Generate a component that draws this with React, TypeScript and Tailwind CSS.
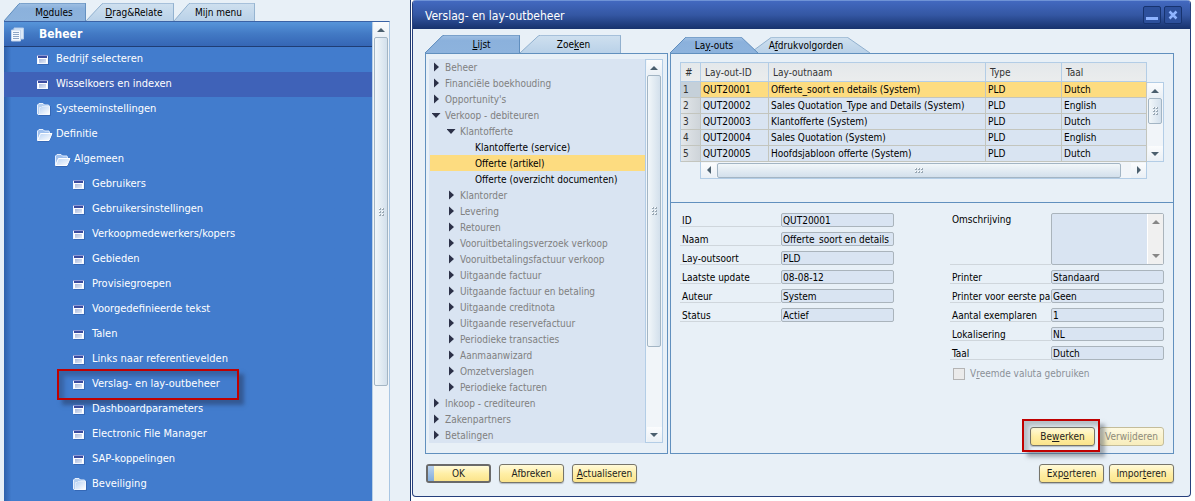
import React from "react";

type IconKind = "form" | "folder" | "open";

const menuItems: { label: string; level: number; icon: IconKind; active?: boolean; marked?: boolean }[] = [
  { label: "Bedrijf selecteren", level: 0, icon: "form" },
  { label: "Wisselkoers en indexen", level: 0, icon: "form", active: true },
  { label: "Systeeminstellingen", level: 0, icon: "folder" },
  { label: "Definitie", level: 0, icon: "open" },
  { label: "Algemeen", level: 1, icon: "open" },
  { label: "Gebruikers", level: 2, icon: "form" },
  { label: "Gebruikersinstellingen", level: 2, icon: "form" },
  { label: "Verkoopmedewerkers/kopers", level: 2, icon: "form" },
  { label: "Gebieden", level: 2, icon: "form" },
  { label: "Provisiegroepen", level: 2, icon: "form" },
  { label: "Voorgedefinieerde tekst", level: 2, icon: "form" },
  { label: "Talen", level: 2, icon: "form" },
  { label: "Links naar referentievelden", level: 2, icon: "form" },
  { label: "Verslag- en lay-outbeheer", level: 2, icon: "form", marked: true },
  { label: "Dashboardparameters", level: 2, icon: "form" },
  { label: "Electronic File Manager", level: 2, icon: "form" },
  { label: "SAP-koppelingen", level: 2, icon: "form" },
  { label: "Beveiliging", level: 2, icon: "folder" },
];

const menuIndent = ["pl-[33px]", "pl-[51px]", "pl-[69px]"];

type Node = { label: string; level: number; state: "closed" | "open" | "leaf"; active?: boolean };

const tree: Node[] = [
  { label: "Beheer", level: 0, state: "closed" },
  { label: "Financiële boekhouding", level: 0, state: "closed" },
  { label: "Opportunity's", level: 0, state: "closed" },
  { label: "Verkoop - debiteuren", level: 0, state: "open" },
  { label: "Klantofferte", level: 1, state: "open" },
  { label: "Klantofferte (service)", level: 2, state: "leaf" },
  { label: "Offerte (artikel)", level: 2, state: "leaf", active: true },
  { label: "Offerte (overzicht documenten)", level: 2, state: "leaf" },
  { label: "Klantorder", level: 1, state: "closed" },
  { label: "Levering", level: 1, state: "closed" },
  { label: "Retouren", level: 1, state: "closed" },
  { label: "Vooruitbetalingsverzoek verkoop", level: 1, state: "closed" },
  { label: "Vooruitbetalingsfactuur verkoop", level: 1, state: "closed" },
  { label: "Uitgaande factuur", level: 1, state: "closed" },
  { label: "Uitgaande factuur en betaling", level: 1, state: "closed" },
  { label: "Uitgaande creditnota", level: 1, state: "closed" },
  { label: "Uitgaande reservefactuur", level: 1, state: "closed" },
  { label: "Periodieke transacties", level: 1, state: "closed" },
  { label: "Aanmaanwizard", level: 1, state: "closed" },
  { label: "Omzetverslagen", level: 1, state: "closed" },
  { label: "Periodieke facturen", level: 1, state: "closed" },
  { label: "Inkoop - crediteuren", level: 0, state: "closed" },
  { label: "Zakenpartners", level: 0, state: "closed" },
  { label: "Betalingen", level: 0, state: "closed" },
];

const treeIndent = ["pl-[2px]", "pl-[17px]", "pl-[32px]"];

const layouts = [
  ["QUT20001", "Offerte_soort en details (System)", "PLD", "Dutch"],
  ["QUT20002", "Sales Quotation_Type and Details (System)", "PLD", "English"],
  ["QUT20003", "Klantofferte (System)", "PLD", "Dutch"],
  ["QUT20004", "Sales Quotation (System)", "PLD", "English"],
  ["QUT20005", "Hoofdsjabloon offerte (System)", "PLD", "Dutch"],
];

const leftFields = [
  ["ID", "QUT20001"],
  ["Naam", "Offerte_soort en details (System)"],
  ["Lay-outsoort", "PLD"],
  ["Laatste update", "08-08-12"],
  ["Auteur", "System"],
  ["Status", "Actief"],
];

const rightFields = [
  ["Printer", "Standaard"],
  ["Printer voor eerste pa", "Geen"],
  ["Aantal exemplaren", "1"],
  ["Lokalisering", "NL"],
  ["Taal", "Dutch"],
];

function MenuIcon({ kind }: { kind: IconKind }) {
  if (kind === "form") {
    return (
      <svg width="16" height="14" viewBox="0 1 16 14" className="shrink-0" aria-hidden="true">
        <rect x="1" y="4" width="11" height="9" fill="#2d5ba6" opacity="0.6" />
        <rect x="0" y="3" width="11" height="9" fill="#f4f8ff" />
        <rect x="1" y="4" width="9" height="2" fill="#3b4ca0" />
        <rect x="0" y="3" width="11" height="1" fill="#8c98d4" />
        <rect x="1" y="6" width="9" height="5" fill="#ffffff" />
        <rect x="2" y="7" width="7" height="4" fill="url(#formFill)" />
      </svg>
    );
  }
  if (kind === "folder") {
    return (
      <svg width="16" height="14" viewBox="0 1 16 14" className="shrink-0" aria-hidden="true">
        <path d="M2 13.500h11.500V4" fill="none" stroke="#2d5ba6" opacity="0.6" />
        <path d="M0.500 12V3L2 1.500h4l1.500 1.500h4L12.500 4.500v8H1z" fill="#b5cff0" stroke="#e8f1fd" />
        <path d="M2.500 5.500h1.500l1-1h7.500v8h-10z" fill="url(#folderFill)" stroke="#ffffff" strokeWidth="0.500" />
      </svg>
    );
  }
  return (
    <svg width="17" height="14" viewBox="0 0 17 14" className="shrink-0" aria-hidden="true">
      <path d="M1 13.500h11L16 5" fill="none" stroke="#2d5ba6" opacity="0.6" />
      <path d="M0.500 12V3L2 1.500h4l1.500 1.500h4.500L12.500 5" fill="#9fc0ee" stroke="#e4efff" />
      <path d="M3.500 5.500h11.500L12 12.500H0.500z" fill="url(#folderFill)" stroke="#ffffff" />
    </svg>
  );
}

function Triangle({ dir }: { dir: "up" | "down" | "left" | "right" }) {
  const shapes = {
    up: "M0 6L4 2L8 6Z",
    down: "M0 2L4 6L8 2Z",
    left: "M6 0L2 4L6 8Z",
    right: "M2 0L6 4L2 8Z",
  };
  return (
    <svg width="8" height="8" viewBox="0 0 8 8" aria-hidden="true">
      <path d={shapes[dir]} fill="currentColor" />
    </svg>
  );
}

function TreeArrow({ state }: { state: "closed" | "open" | "leaf" }) {
  return (
    <svg width="13" height="10" viewBox="0 0 13 10" className="shrink-0 text-[#2c3148]" aria-hidden="true">
      {state === "closed" && <path d="M2 0.500L7 5L2 9.500Z" fill="currentColor" />}
      {state === "open" && <path d="M-0.500 3H8.500L4 8Z" fill="currentColor" />}
    </svg>
  );
}

function Grip({ horizontal }: { horizontal?: boolean }) {
  return (
    <span className={horizontal ? "grid grid-cols-3 gap-px" : "grid grid-cols-2 gap-px"} aria-hidden="true">
      {[0, 1, 2, 3, 4, 5].map((i) => (
        <span key={i} className="size-[2px] border-b border-r border-[#9aa9b5] bg-white" />
      ))}
    </span>
  );
}

function ScrollButton({ dir, label }: { dir: "up" | "down" | "left" | "right"; label: string }) {
  return (
    <button
      type="button"
      aria-label={label}
      className="flex size-[15px] shrink-0 items-center justify-center bg-gradient-to-b from-[#fbfcfd] to-[#eaf0f6] text-[#4b5f6e]"
    >
      <Triangle dir={dir} />
    </button>
  );
}

type TabProps = { children: React.ReactNode; active?: boolean; className: string; shape: "left" | "both" };

function Tab({ children, active, className, shape }: TabProps) {
  const path = shape === "left" ? "M0 100L18 6L20 1H99.500V100" : "M0 100L18 1H81L100 100";
  return (
    <button type="button" role="tab" aria-selected={!!active} className={`relative shrink-0 text-black ${className}`}>
      <svg
        className="absolute inset-0 size-full"
        viewBox="0 0 100 100"
        preserveAspectRatio="none"
        aria-hidden="true"
      >
        <path
          d={path}
          fill={active ? "url(#tabActive)" : "url(#tabIdle)"}
          stroke={active ? "#5f8dbd" : "#90b0ce"}
          vectorEffect="non-scaling-stroke"
        />
      </svg>
      <span className="relative">{children}</span>
    </button>
  );
}

function GoldButton({ children, primary, disabled }: {
  children: React.ReactNode;
  primary?: boolean;
  disabled?: boolean;
}) {
  const edge = primary
    ? "border-2 border-[#6a6a6a]"
    : disabled
      ? "border border-[#c4bd9a]"
      : "border border-[#77756a] shadow-[0_1px_1px_rgba(80,90,100,0.35)]";
  const tone = disabled
    ? "bg-gradient-to-b from-[#fdf9e3] to-[#f8edbb] text-[#8d8b7c]"
    : "bg-gradient-to-b from-[#fffad9] via-[#ffefa6] to-[#fbe48b] text-[#1d1d1d]";
  return (
    <button
      type="button"
      disabled={disabled}
      className={`flex h-[19px] w-[65px] shrink-0 items-center justify-center whitespace-nowrap rounded-[3px] ${edge} ${tone}`}
    >
      {primary && <span className="h-full w-[6px] bg-gradient-to-b from-[#b9d2ee] to-[#84addb]" />}
      <span className={primary ? "flex-1 pr-[6px]" : ""}>{children}</span>
    </button>
  );
}

function Field({ id, label, value }: { id: string; label: string; value: string }) {
  return (
    <div className="flex h-[14px]">
      <label htmlFor={id} className="w-[101px] whitespace-nowrap border-b border-[#cfd6dc] pl-[2px] leading-[15px]">
        {label}
      </label>
      <input
        id={id}
        readOnly
        value={value}
        className="h-[14px] w-[113px] rounded-[2px] border border-[#aab4bc] bg-[#d9e4f2] px-px leading-[12px] text-black outline-none"
      />
    </div>
  );
}

export default function App() {
  return (
    <div className="flex min-h-screen bg-[#e8f0f7] font-['DejaVu_Sans_Condensed','DejaVu_Sans',sans-serif] text-[10px] text-black">
      <svg width="0" height="0" className="absolute" aria-hidden="true">
        <defs>
          <linearGradient id="tabActive" x1="0" y1="0" x2="0" y2="1">
            <stop offset="0" stopColor="#a0c0e3" />
            <stop offset="0.300" stopColor="#8bb1dc" />
            <stop offset="1" stopColor="#8db3dd" />
          </linearGradient>
          <linearGradient id="tabIdle" x1="0" y1="0" x2="0" y2="1">
            <stop offset="0" stopColor="#cfe0ef" />
            <stop offset="1" stopColor="#b9d1e8" />
          </linearGradient>
          <linearGradient id="formFill" x1="0" y1="0" x2="1" y2="1">
            <stop offset="0" stopColor="#a9b9dd" />
            <stop offset="1" stopColor="#e3eaf6" />
          </linearGradient>
          <linearGradient id="folderFill" x1="0" y1="0" x2="1" y2="1">
            <stop offset="0" stopColor="#b9d3f4" />
            <stop offset="1" stopColor="#ffffff" />
          </linearGradient>
        </defs>
      </svg>

      <aside className="flex w-[390px] shrink-0 flex-col pl-1">
        <div role="tablist" className="flex h-[21px] shrink-0 items-end">
          <Tab active shape="left" className="h-[18px] w-[82px] pl-[18px]">
            M<u>o</u>dules
          </Tab>
          <Tab shape="left" className="h-[18px] w-[88px] pl-2">
            <u>D</u>rag&amp;Relate
          </Tab>
          <Tab shape="left" className="h-[18px] w-[81px] pl-2">
            Mi<u>j</u>n menu
          </Tab>
        </div>
        <div className="flex flex-1 border-r border-t border-[#a9c6e3] border-t-[#3a62a5]">
          <nav className="min-w-0 flex-1 bg-gradient-to-r from-[#2f62ac] via-[#427ccd] via-[2%] to-[#427ccd] text-[11px] text-white">
            <div className="flex h-[25px] items-center gap-[14px] border-b border-[#1f3d74] bg-gradient-to-b from-[#5795da] via-[#4279c4] to-[#3566b5] pl-[6px] text-[12px] font-bold">
              <svg width="15" height="15" viewBox="0 0 15 15" className="shrink-0" aria-hidden="true">
                <path d="M4 1h9.500v11H4z" fill="#dce9f8" stroke="#b6cdea" />
                <path d="M1.500 3h9v11h-9z" fill="#f6faff" stroke="#c4d6ee" />
                <path d="M3 5.500h6M3 7.500h6M3 9.500h6M3 11.500h6" stroke="#8ea6c6" />
              </svg>
              <span>Beheer</span>
            </div>
            <ul>
              {menuItems.map((item) => (
                <li key={item.label} className="relative">
                  <a
                    href="#"
                    className={`flex h-[25px] items-center gap-[3px] whitespace-nowrap ${menuIndent[item.level]} ${item.active ? "bg-[#3f62b8]" : ""}`}
                  >
                    <MenuIcon kind={item.icon} />
                    <span className={item.icon === "open" ? "-ml-px" : ""}>{item.label}</span>
                  </a>
                  {item.marked && (
                    <span className="pointer-events-none absolute -top-[3px] left-[53px] h-[31px] w-[182px] border-2 border-[#c00000] shadow-[5px_5px_4px_rgba(40,60,100,0.55),inset_5px_5px_4px_rgba(40,60,100,0.4)]" />
                  )}
                </li>
              ))}
            </ul>
          </nav>
          <div className="flex w-[17px] shrink-0 flex-col items-center border-l border-[#b9d0e6] bg-[#f1f5f9]">
            <ScrollButton dir="up" label="Omhoog" />
            <div className="flex h-[349px] w-[14px] items-center justify-center rounded-[2px] border border-[#a3b5c4] bg-gradient-to-r from-[#f2f7fa] to-[#d3e0ec]">
              <Grip />
            </div>
          </div>
        </div>
      </aside>

      <main className="ml-5 flex min-w-0 flex-1 items-start border-l border-[#1f3a70] bg-white pl-px pr-1">
        <section className="min-w-0 flex-1 overflow-hidden rounded-[4px] border border-t-0 border-[#263f7c] bg-[#e8f0f7]">
          <header className="flex h-[29px] items-center justify-between border-t border-[#6f93d6] bg-gradient-to-b from-[#4369c0] via-[#3457a3] to-[#17326d] pl-3 pr-2 text-white">
            <h1 className="pt-[2px] text-[12px]">Verslag- en lay-outbeheer</h1>
            <div className="flex gap-[3px]">
              <button type="button" aria-label="Minimaliseren" className="flex size-[18px] items-end justify-center rounded-[2px] border border-[#17336f] bg-[#2d509c] pb-[3px]">
                <span className="h-[3px] w-3 bg-[#8fb4ff]" />
              </button>
              <button type="button" aria-label="Sluiten" className="flex size-[18px] items-center justify-center rounded-[2px] border border-[#17336f] bg-[#2d509c]">
                <svg width="10" height="10" viewBox="0 0 10 10" aria-hidden="true">
                  <path d="M1.500 1.500L8.500 8.500M8.500 1.500L1.500 8.500" stroke="#8fb4ff" strokeWidth="2.500" />
                </svg>
              </button>
            </div>
          </header>

          <div className="flex gap-[2px] pl-3 pr-4 pt-[6px]">
            <div className="flex w-[243px] shrink-0 flex-col">
              <div role="tablist" className="flex h-[18px]">
                <Tab active shape="left" className="w-[95px] pl-[18px]">
                  <u>L</u>ijst
                </Tab>
                <Tab shape="left" className="w-[101px] pl-[6px]">
                  Zoe<u>k</u>en
                </Tab>
              </div>
              <div className="flex border border-[#6190be] pb-[10px] pl-[3px] pr-[4px] pt-[5px]">
                <ul className="min-w-0 flex-1 bg-[#d9e4f2]">
                  {tree.map((n) => (
                    <li
                      key={n.label}
                      className={`ml-px flex h-4 items-center whitespace-nowrap ${treeIndent[n.level]} ${n.active ? "bg-[#fddc80]" : ""} ${n.state === "leaf" ? "text-black" : "text-[#808080]"}`}
                    >
                      <TreeArrow state={n.state} />
                      {n.label}
                    </li>
                  ))}
                </ul>
                <div className="flex w-[18px] shrink-0 flex-col items-center border border-[#b3cde6] bg-[#f1f5f9]">
                  <ScrollButton dir="up" label="Omhoog" />
                  <div className="flex h-[272px] w-[14px] items-center justify-center rounded-[2px] border border-[#a3b5c4] bg-gradient-to-r from-[#f2f7fa] to-[#d3e0ec]">
                    <Grip />
                  </div>
                  <div className="flex-1" />
                  <ScrollButton dir="down" label="Omlaag" />
                </div>
              </div>
            </div>

            <div className="flex min-w-0 flex-1 flex-col">
              <div role="tablist" className="flex h-[18px] items-end">
                <Tab active shape="both" className="z-10 h-4 w-[88px]">
                  La<u>y</u>-outs
                </Tab>
                <Tab shape="both" className="-ml-2 h-4 w-[120px] pr-2">
                  A<u>f</u>drukvolgorden
                </Tab>
              </div>
              <div className="flex flex-1 flex-col border border-[#6190be]">
                <div className="border-b border-[#6190be] px-[9px] pb-[23px] pt-2">
                  <div className="flex items-end">
                    <table className="min-w-0 flex-1 border-separate border-spacing-0 border-l border-t border-[#b3cde6] text-left">
                      <thead>
                        <tr className="h-[19px] bg-gradient-to-b from-[#e4e8eb] to-[#ebeded] text-[#333] [&>th]:border-b [&>th]:border-r [&>th]:border-[#b3cde6] [&>th]:px-1 [&>th]:py-0 [&>th]:font-normal">
                          <th className="w-5">#</th>
                          <th className="w-[68px]">Lay-out-ID</th>
                          <th>Lay-outnaam</th>
                          <th className="w-[76px]">Type</th>
                          <th className="w-[85px]">Taal</th>
                        </tr>
                      </thead>
                      <tbody>
                        {layouts.map((row, i) => (
                          <tr
                            key={row[0]}
                            className={`h-4 leading-[15px] ${i === 0 ? "bg-[#fddc80]" : "bg-[#d9e4f2]"} [&>td]:border-b [&>td]:border-r [&>td]:border-[#c3c5be] [&>td]:px-[2px] [&>td]:py-0`}
                          >
                            <td className={i === 0 ? "bg-[#c5d0d9] text-[#333]" : "bg-gradient-to-r from-[#e3e7ea] to-[#ced4d9] text-[#333]"}>{i + 1}</td>
                            {row.map((cell) => (
                              <td key={cell}>{cell}</td>
                            ))}
                          </tr>
                        ))}
                      </tbody>
                    </table>
                    <div className="flex h-[80px] w-[17px] shrink-0 flex-col items-center border border-l-0 border-[#b3cde6] bg-[#f1f5f9]">
                      <ScrollButton dir="up" label="Omhoog" />
                      <div className="flex h-[26px] w-[14px] items-center justify-center rounded-[2px] border border-[#a3b5c4] bg-gradient-to-r from-[#f2f7fa] to-[#d3e0ec]">
                        <Grip />
                      </div>
                      <div className="flex-1" />
                      <ScrollButton dir="down" label="Omlaag" />
                    </div>
                  </div>
                  <div className="ml-5 mr-[17px] flex h-[17px] items-center border border-t-0 border-[#b3cde6] bg-[#f1f5f9]">
                    <ScrollButton dir="left" label="Naar links" />
                    <div className="ml-px flex h-[15px] flex-1 items-center justify-center rounded-[2px] border border-[#a3b5c4] bg-gradient-to-b from-[#f2f7fa] to-[#d3e0ec]">
                      <Grip horizontal />
                    </div>
                    <div className="w-[10px]" />
                    <ScrollButton dir="right" label="Naar rechts" />
                  </div>
                </div>

                <div className="flex justify-between px-[9px] pt-[10px]">
                  <div className="flex flex-col gap-[5px]">
                    {leftFields.map(([label, value], i) => (
                      <Field key={label} id={`algemeen-${i}`} label={label} value={value} />
                    ))}
                  </div>
                  <div className="flex flex-col gap-[5px]">
                    <div className="flex h-[52px]">
                      <label htmlFor="omschrijving" className="w-[101px] border-b border-[#cfd6dc] pl-[2px] leading-[14px]">
                        Omschrijving
                      </label>
                      <div className="flex w-[113px] rounded-[2px] border border-[#aab4bc] bg-[#d9e4f2]">
                        <textarea id="omschrijving" readOnly className="min-w-0 flex-1 resize-none outline-none" />
                        <div className="flex w-4 flex-col items-center justify-between border-l border-white bg-[#f0f0f0] py-1 text-[#868686]">
                          <Triangle dir="up" />
                          <Triangle dir="down" />
                        </div>
                      </div>
                    </div>
                    {rightFields.map(([label, value], i) => (
                      <Field key={label} id={`afdruk-${i}`} label={label} value={value} />
                    ))}
                    <label className="flex items-center gap-[5px] pl-[3px] pt-[1px] text-[#8b9197]">
                      <input type="checkbox" disabled className="size-3 appearance-none border border-[#b4b4b4] bg-[#ebebeb]" />
                      <span>
                        V<u>r</u>eemde valuta gebruiken
                      </span>
                    </label>
                  </div>
                </div>

                <div className="mt-auto flex justify-end gap-1 pb-[7px] pr-[9px]">
                  <div className="relative z-10">
                    <GoldButton>
                      Be<u>w</u>erken
                    </GoldButton>
                    <span className="pointer-events-none absolute -left-2 -top-2 h-[33px] w-[78px] border-2 border-[#c00000] shadow-[5px_5px_4px_rgba(90,100,110,0.5),inset_5px_5px_4px_rgba(90,100,110,0.35)]" />
                  </div>
                  <GoldButton disabled>
                    Verwi<u>j</u>deren
                  </GoldButton>
                </div>
              </div>
            </div>
          </div>

          <footer className="flex justify-between pb-[13px] pl-[13px] pr-4 pt-[10px]">
            <div className="flex gap-2">
              <GoldButton primary>OK</GoldButton>
              <GoldButton>Afbreken</GoldButton>
              <GoldButton>
                <u>A</u>ctualiseren
              </GoldButton>
            </div>
            <div className="flex gap-[5px]">
              <GoldButton>
                Exp<u>o</u>rteren
              </GoldButton>
              <GoldButton>
                Impor<u>t</u>eren
              </GoldButton>
            </div>
          </footer>
        </section>
      </main>
    </div>
  );
}
